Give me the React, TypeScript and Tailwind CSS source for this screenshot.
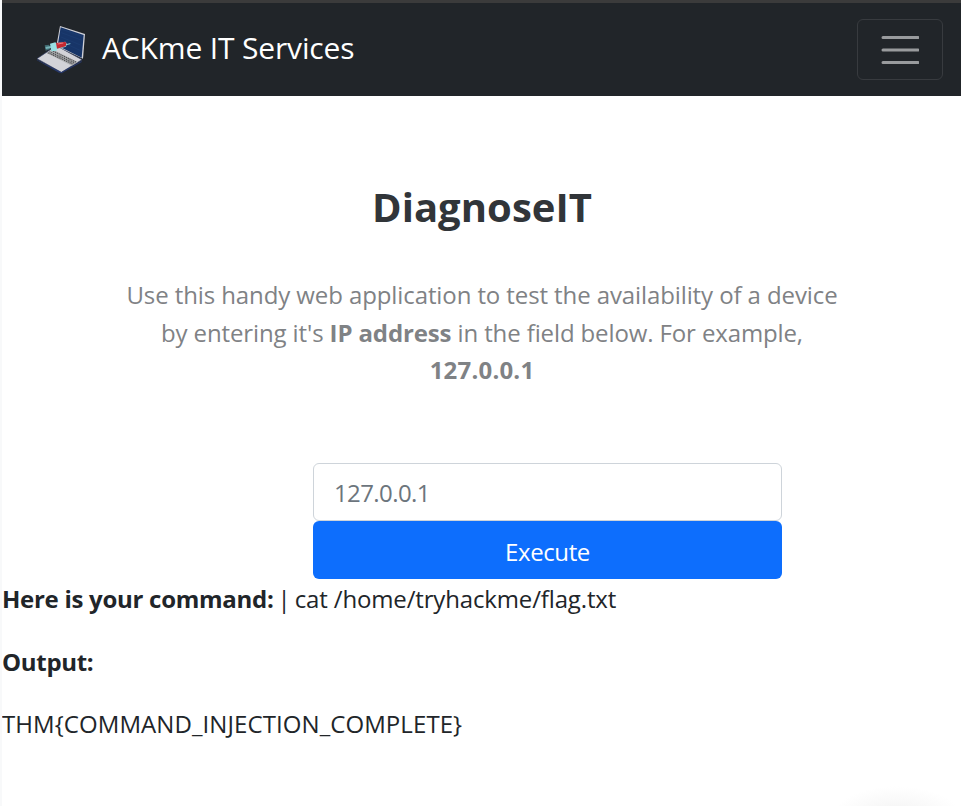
import React from "react";

function Logo() {
  return (
    <svg width="50" height="50" viewBox="19 15 150 150" className="block shrink-0">
      <path d="M22 116 L80 77 L157 119 L95 157 Z" fill="#d3d3d8" stroke="#343f68" strokeWidth="2" />
      <path d="M22 119 L95 157 L157 122 L155 127 L96 160 L88 158 L22 121 Z" fill="#26386c" />
      <path d="M51 99 L68 88 L144 126 L126 137 Z" fill="#b4b5b7" />
      <path d="M54 98 L131 133 M59 95 L136 130 M65 91 L141 127" fill="none" stroke="#4c4d50" strokeWidth="3.5" strokeDasharray="4 2" />
      <path d="M91 18 L166 42 L160 116 L80 78 Z" fill="#d0d1d8" />
      <path d="M93 22 L162 45 L156 113 L84 77 Z" fill="#173568" />
      <path d="M97 28 L157 49 M95 38 L157 61 M94 51 L155 76 M91 63 L153 92" fill="none" stroke="#1c3e73" strokeWidth="2" />
      <path d="M45 76 L48 92 L61 88 L59 74 Z" fill="#426d74" />
      <path d="M48 84 L64 81" stroke="#78b4b8" strokeWidth="6" />
      <path d="M61 71 L77 67 L79 69 L107 65 L112 71 L109 80 L82 88 L81 92 L65 94 Z" fill="#98dfe3" />
      <path d="M79 69 L107 65 L111 71 L108 79 L82 86 Z" fill="#c42831" />
      <path d="M84 72 L101 69" stroke="#ef777d" strokeWidth="3" />
      <path d="M109 74 L122 71" stroke="#93d6dd" strokeWidth="3" />
    </svg>
  );
}

export default function App() {
  return (
    <div className="relative h-[806px] overflow-hidden border-l-2 border-[#f8f9fa] bg-white font-['Open_Sans','Noto_Sans',sans-serif] text-[24px] leading-[37.5px] text-[#212529]">
      <div className="-ml-0.5 h-[3px] bg-[#3b3b3b]" />
      <nav className="flex h-[93px] items-center justify-between bg-[#212529] pr-[18px] pl-[34px]">
        <a className="flex items-center gap-4 text-white">
          <Logo />
          <span className="-mt-1 text-[30px] tracking-[-0.15px]">ACKme IT Services</span>
        </a>
        <button aria-label="Toggle navigation" className="flex h-[61px] w-[86px] items-center justify-center rounded-md border border-[#383b3f]">
          <svg width="38" height="30" viewBox="0 0 38 30" fill="none" stroke="#999b9d" strokeWidth="3" strokeLinecap="round">
            <path d="M2 2.5H37M2 15H37M2 27.5H37" />
          </svg>
        </button>
      </nav>
      <main>
        <h1 className="pt-[81px] pl-px text-center text-[40px] leading-[60px] font-bold tracking-[0.05px] text-[#313539]">DiagnoseIT</h1>
        <div className="mt-[39px] pl-px text-center text-[#7f8285]">
          <p className="tracking-[-0.1px]">Use this handy web application to test the availability of a device</p>
          <p className="tracking-[-0.12px]">by entering it's <strong>IP address</strong> in the field below. For example,</p>
          <p className="tracking-[0.2px]"><strong>127.0.0.1</strong></p>
        </div>
        <form className="mt-[74px] ml-[311px] flex w-[469px] flex-col">
          <input aria-label="IP address" placeholder="127.0.0.1" className="h-[58px] rounded-md border border-[#ced4da] px-5 pt-0.5 tracking-[-0.6px] placeholder:text-[#6c757d] placeholder:opacity-100" />
          <button type="button" className="h-[58px] rounded-md bg-[#0d6efd] pt-1 tracking-[-0.4px] text-white">Execute</button>
        </form>
        <p className="mt-px whitespace-nowrap tracking-[-0.15px]"><strong className="tracking-[-0.28px]">Here is your command:</strong><span className="[word-spacing:-2px]"> | </span>cat /home/tryhackme/flag.txt</p>
        <p className="mt-[25.5px] tracking-[-0.3px]"><strong>Output:</strong></p>
        <p className="mt-[24.5px] tracking-[0.08px]">THM&#123;COMMAND_INJECTION_COMPLETE&#125;</p>
      </main>
      <div className="absolute -bottom-11 left-[829px] h-16 w-[132px] rounded-full bg-[radial-gradient(ellipse,#f2f2f2_0%,#ffffff_70%)]" />
    </div>
  );
}
